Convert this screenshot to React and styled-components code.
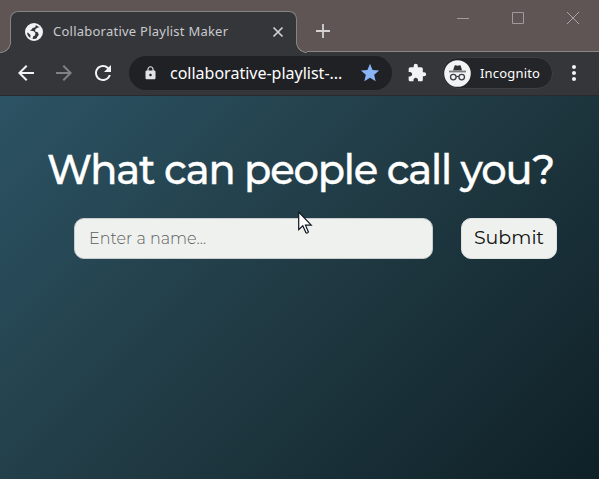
import React from "react";
import styled, { createGlobalStyle, css } from "styled-components";
import {
  MdArrowBack,
  MdArrowForward,
  MdRefresh,
  MdLock,
  MdStar,
  MdExtension,
  MdMoreVert,
} from "react-icons/md";

const GlobalStyle = createGlobalStyle`
  * { box-sizing: border-box; }
  body { margin: 0; overflow: hidden; }
`;

const uiFont = css`
  font-family: "Noto Sans", "Open Sans", sans-serif;
`;

const Window = styled.div`
  position: relative;
  display: flex;
  flex-direction: column;
  width: 599px;
  height: 479px;
  overflow: hidden;
`;

const TitleBar = styled.header`
  display: flex;
  align-items: flex-start;
  flex: none;
  height: 52px;
  padding: 11px 19px 0 10px;
  background: #5f5555;
  border-bottom: 1px solid #8b8585;
`;

const Tab = styled.div`
  position: relative;
  display: flex;
  align-items: center;
  width: 287px;
  height: 41px;
  padding: 0 12px 1px 14px;
  background: #35363a;
  border: 1px solid #858383;
  border-bottom: 0;
  border-radius: 8px 8px 0 0;
  box-shadow: 0 1px 0 #35363a;

  &::before,
  &::after {
    content: "";
    position: absolute;
    bottom: -1px;
    width: 11px;
    height: 11px;
  }
  &::before {
    left: -11px;
    background: radial-gradient(circle at 0 0, #5f5555 9.7px, #858383 10.2px 10.7px, #35363a 11.2px);
  }
  &::after {
    right: -11px;
    background: radial-gradient(circle at 100% 0, #5f5555 9.7px, #858383 10.2px 10.7px, #35363a 11.2px);
  }
`;

const Favicon = styled.svg`
  display: block;
  flex: none;
  width: 18px;
  height: 18px;
`;

const TabTitle = styled.span`
  ${uiFont}
  flex: 1;
  margin: -2px 0 0 10px;
  color: #c9cacd;
  font-size: 13px;
  line-height: 18px;
  letter-spacing: 0.24px;
  white-space: nowrap;
`;

const TabClose = styled.svg`
  width: 12px;
  height: 12px;
  flex: none;
`;

const NewTab = styled.svg`
  width: 16px;
  height: 16px;
  margin: 12px 0 0 18px;
`;

const WindowControls = styled.div`
  display: flex;
  gap: 41px;
  margin-left: auto;
`;

const Control = styled.svg`
  width: 14px;
  height: 14px;
`;

const Toolbar = styled.nav`
  display: flex;
  align-items: center;
  flex: none;
  height: 44px;
  padding: 0 13px 1px 14px;
  background: #35363a;
  border-bottom: 1px solid #292a2d;
`;

const IconButton = styled.span`
  display: flex;
  align-items: center;
  justify-content: center;
  width: ${(p) => p.$width || 38}px;
  height: 24px;
  flex: none;
  color: ${(p) => p.$color || "#f1f3f4"};
  font-size: ${(p) => p.$size || 24}px;
`;

const AddressBar = styled.div`
  display: flex;
  align-items: center;
  flex: none;
  width: 263px;
  height: 34px;
  margin-left: 13px;
  padding: 0 11px 0 14px;
  border-radius: 17px;
  background: #202124;
`;

const Address = styled.span`
  ${uiFont}
  flex: 1;
  margin-left: 12px;
  color: #fff;
  font-size: 16px;
  line-height: 24px;
  letter-spacing: 0;
  white-space: nowrap;
`;

const IncognitoChip = styled.div`
  ${uiFont}
  display: flex;
  align-items: center;
  flex: none;
  width: 111px;
  height: 32px;
  margin: 0 9px 0 0;
  padding: 0 1px;
  gap: 9px;
  border: 1px solid #3e3f43;
  border-radius: 16px;
  background: #242528;
  color: #fff;
  font-size: 13px;
  letter-spacing: 0.18px;
`;

const IncognitoIcon = styled.svg`
  width: 27px;
  height: 27px;
  flex: none;
`;

const Page = styled.main`
  flex: 1;
  background: linear-gradient(135deg, #2c5364, #203a43 50%, #0f2027);
`;

const Heading = styled.h1`
  margin: 49px 0 0 47px;
  color: #fff;
  font-family: "Montserrat", Inter, sans-serif;
  font-size: 40px;
  font-weight: 500;
  line-height: 49px;
  letter-spacing: -1.18px;
  white-space: nowrap;
  -webkit-text-stroke: 0.35px #fff;
`;

const NameForm = styled.form`
  display: flex;
  gap: 28px;
  margin: 24px 0 0 74px;
`;

const NameInput = styled.input`
  width: 359px;
  height: 41px;
  padding: 0 14px;
  border: 1px solid #c9cccc;
  border-radius: 10px;
  outline: 0;
  background: #eff1ee;
  font-family: "Montserrat", Inter, sans-serif;
  font-size: 16px;
  font-weight: 300;
  letter-spacing: 0;

  &::placeholder {
    color: #5c605f;
    opacity: 1;
  }
`;

const SubmitButton = styled.button`
  width: 96px;
  height: 41px;
  padding: 0 0 2px;
  border: 1px solid #dfe2e0;
  border-radius: 10px;
  background: #eff1ee;
  color: #111;
  font-family: "Montserrat", Inter, sans-serif;
  font-size: 19px;
  font-weight: 400;
  letter-spacing: 0;
`;

const Pointer = styled.svg`
  position: absolute;
  left: 298px;
  top: 211px;
  width: 15px;
  height: 24px;
`;

function Globe() {
  return (
    <Favicon viewBox="0 0 18 18">
      <circle cx="9" cy="9" r="8" fill="#35363a" stroke="#f1f3f4" strokeWidth="2" />
      <path
        d="M1 9.4 C.6 4 4.6 .8 9.6 1 L10.8 2.6 L10.2 4.3 L7.6 5.1 L6.6 6.4 L4.8 7.6 L8.8 8.2 L10.4 10 L10.1 12.2 L8.1 13.6 L7.4 16.3 L5.2 15.3 L5.5 11.9 L3.1 9.8Z M10.4 6.1 L13.4 4.3 L15.8 5.2 L17 9 C16.8 12.4 14.6 15.7 11.2 16.5 L12.3 13.7 L13.8 11.7 L12.8 9.3 L10.1 8.4Z"
        fill="#f1f3f4"
      />
    </Favicon>
  );
}

function Incognito() {
  return (
    <IncognitoIcon viewBox="0 0 27 27">
      <circle cx="13.5" cy="13.5" r="13.3" fill="#f1f3f4" />
      <path d="M9.1 10.5 L10.5 5.8 Q10.8 5 11.7 5.2 L13.6 5.8 L15.6 5.2 Q16.4 5 16.7 5.8 L18.1 10.5Z" fill="#303135" />
      <path d="M5 11.5H22" stroke="#7b7d7b" strokeWidth="1.8" />
      <g fill="none" stroke="#3c3d40" strokeWidth="1.3">
        <circle cx="9.3" cy="17.1" r="2.8" />
        <circle cx="17.7" cy="17.1" r="2.8" />
        <path d="M12 16.8Q13.5 15.9 15 16.8" />
      </g>
    </IncognitoIcon>
  );
}

export default function App() {
  return (
    <>
      <GlobalStyle />
      <Window>
        <TitleBar>
          <Tab>
            <Globe />
            <TabTitle>Collaborative Playlist Maker</TabTitle>
            <TabClose viewBox="0 0 12 12">
              <path d="M1.5 1.5L10.5 10.5M10.5 1.5L1.5 10.5" stroke="#d0d1d3" strokeWidth="1.7" />
            </TabClose>
          </Tab>
          <NewTab viewBox="0 0 16 16">
            <path d="M1 8H15M8 1V15" stroke="#d4d2d2" strokeWidth="1.8" />
          </NewTab>
          <WindowControls>
            <Control viewBox="0 0 14 14">
              <path d="M1 7.5H13" stroke="#a09a9a" />
            </Control>
            <Control viewBox="0 0 14 14">
              <path d="M1.5 1.5H12.5V12.5H1.5Z" fill="none" stroke="#a09a9a" />
            </Control>
            <Control viewBox="0 0 14 14">
              <path d="M1 1L13 13M13 1L1 13" stroke="#aaa4a4" />
            </Control>
          </WindowControls>
        </TitleBar>
        <Toolbar>
          <IconButton $width={24}><MdArrowBack /></IconButton>
          <IconButton $width={52} $color="#818286"><MdArrowForward /></IconButton>
          <IconButton $width={26}><MdRefresh /></IconButton>
          <AddressBar>
            <IconButton $width={15} $size={16} $color="#e2e3e5"><MdLock /></IconButton>
            <Address>collaborative-playlist-...</Address>
            <IconButton $width={22} $size={22} $color="#8ab4f8"><MdStar /></IconButton>
          </AddressBar>
          <IconButton $width={50} $size={20}><MdExtension /></IconButton>
          <IncognitoChip>
            <Incognito />
            Incognito
          </IncognitoChip>
          <IconButton $width={24}><MdMoreVert /></IconButton>
        </Toolbar>
        <Page>
          <Heading>What can people call you?</Heading>
          <NameForm onSubmit={(e) => e.preventDefault()}>
            <NameInput placeholder="Enter a name..." aria-label="Name" />
            <SubmitButton type="submit">Submit</SubmitButton>
          </NameForm>
        </Page>
        <Pointer viewBox="0 0 15 24">
          <path d="M.7 1V18.7L4.8 14.8L8 21.8Q9.2 22.7 10.4 21L7.5 14.2H13.2Z" fill="#fff" stroke="#101722" strokeWidth="1.2" />
        </Pointer>
      </Window>
    </>
  );
}
